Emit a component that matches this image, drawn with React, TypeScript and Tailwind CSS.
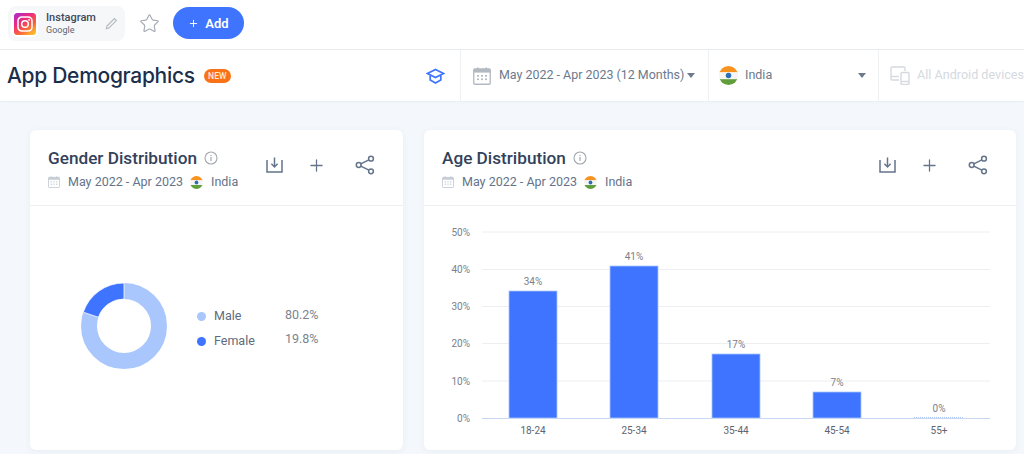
import type { ReactNode } from "react"
import { Plus, Star } from "lucide-react"

function Flag({ size }: { size: number }) {
  return (
    <svg width={size} height={size} viewBox="0 0 18 18" className="shrink-0">
      <defs>
        <clipPath id="flag-clip">
          <circle cx="9" cy="9" r="9" />
        </clipPath>
      </defs>
      <g clipPath="url(#flag-clip)">
        <rect width="18" height="6" fill="#f7931e" />
        <rect y="6" width="18" height="6.5" fill="#f5f5f5" />
        <rect y="12.5" width="18" height="5.5" fill="#5f9e3a" />
      </g>
      <circle cx="9" cy="9" r="2.6" fill="#2f6db5" />
    </svg>
  )
}

function CalendarIcon({ className }: { className: string }) {
  return (
    <svg viewBox="0 0 18 18" className={className} fill="none">
      <rect x="0.75" y="2" width="16.5" height="15.25" rx="1" fill="#fff" stroke="currentColor" strokeWidth="1.3" />
      <rect x="0.75" y="2" width="16.5" height="3.6" fill="currentColor" />
      <rect x="4" y="0.5" width="1.6" height="3" fill="currentColor" />
      <rect x="12.4" y="0.5" width="1.6" height="3" fill="currentColor" />
      <g fill="currentColor">
        <rect x="4" y="8" width="2" height="1.6" />
        <rect x="8" y="8" width="2" height="1.6" />
        <rect x="12" y="8" width="2" height="1.6" />
        <rect x="4" y="11.5" width="2" height="1.6" />
        <rect x="8" y="11.5" width="2" height="1.6" />
        <rect x="12" y="11.5" width="2" height="1.6" />
      </g>
    </svg>
  )
}

function InstagramLogo() {
  return (
    <svg width="22" height="22" viewBox="0 0 22 22">
      <defs>
        <linearGradient id="ig-grad" x1="0" y1="0" x2="0.7" y2="1">
          <stop offset="0" stopColor="#a22bd8" />
          <stop offset="0.4" stopColor="#ee2a7b" />
          <stop offset="0.75" stopColor="#f9663a" />
          <stop offset="1" stopColor="#fdb32b" />
        </linearGradient>
      </defs>
      <rect width="22" height="22" rx="3.5" fill="url(#ig-grad)" />
      <rect x="4" y="4" width="14" height="14" rx="3.8" fill="none" stroke="#fff" strokeWidth="1.5" />
      <circle cx="11" cy="11" r="3.3" fill="none" stroke="#fff" strokeWidth="1.5" />
      <circle cx="15.1" cy="6.9" r="0.9" fill="#fff" />
    </svg>
  )
}

function InfoIcon() {
  return (
    <svg width="14" height="14" viewBox="0 0 14 14" fill="none" className="shrink-0">
      <circle cx="7" cy="7" r="6" stroke="#a3a9b0" strokeWidth="1.1" />
      <rect x="6.4" y="6" width="1.2" height="4" fill="#a3a9b0" />
      <rect x="6.4" y="3.9" width="1.2" height="1.2" fill="#a3a9b0" />
    </svg>
  )
}

function CardActions() {
  return (
    <div className="flex h-fit items-center pt-[25px] pr-[28px] text-[#64748b]">
      <svg width="17" height="16" viewBox="0 0 17 16" fill="none" stroke="currentColor" strokeWidth="1.5">
        <path d="M1 3v12h15V3" />
        <path d="M8.5 0.5v9" />
        <path d="M5.4 6.8 8.5 10l3.1-3.2" />
      </svg>
      <Plus size={19} strokeWidth={1.6} className="ml-[24px]" />
      <svg width="20" height="20" viewBox="0 0 20 20" fill="none" stroke="currentColor" strokeWidth="1.5" className="ml-[29px]">
        <circle cx="16" cy="3.7" r="2.4" />
        <circle cx="3.7" cy="10" r="2.4" />
        <circle cx="16" cy="16.3" r="2.4" />
        <path d="M5.8 8.9 13.9 4.8M5.8 11.1l8.1 4.1" />
      </svg>
    </div>
  )
}

function CardHeader({ title, actions }: { title: string; actions: ReactNode }) {
  return (
    <div className="flex h-[76px] justify-between border-b border-[#edf0f3] pl-[18px]">
      <div className="pt-[17px]">
        <div className="flex items-center gap-[7px]">
          <span className="text-[17.2px] leading-[22px] font-medium text-[#33425b]">{title}</span>
          <InfoIcon />
        </div>
        <div className="mt-[4px] flex items-center text-[12.5px] leading-[18px] text-[#64748b]">
          <CalendarIcon className="h-[12px] w-[12px] text-[#c5ccd5]" />
          <span className="ml-[8px]">May 2022 - Apr 2023</span>
          <span className="ml-[7px]"><Flag size={13} /></span>
          <span className="ml-[8px]">India</span>
        </div>
      </div>
      {actions}
    </div>
  )
}

const ticks = [
  { label: "50%", y: 232 },
  { label: "40%", y: 269.5 },
  { label: "30%", y: 306.5 },
  { label: "20%", y: 343.5 },
  { label: "10%", y: 381 },
]

const bars = [
  { label: "18-24", value: "34%", x: 509, top: 291 },
  { label: "25-34", value: "41%", x: 610, top: 266 },
  { label: "35-44", value: "17%", x: 712, top: 354 },
  { label: "45-54", value: "7%", x: 813, top: 392 },
]

function AgeChart() {
  return (
    <svg viewBox="424 206 592 244" className="h-[244px] w-[592px]" fontSize="10">
      {ticks.map((t) => (
        <g key={t.label}>
          <line x1="482" x2="990" y1={t.y} y2={t.y} stroke="#eceef0" />
          <text x="470" y={t.y + 3.5} textAnchor="end" fill="#7a818b">{t.label}</text>
        </g>
      ))}
      <text x="470" y="421.5" textAnchor="end" fill="#7a818b">0%</text>
      {bars.map((b) => (
        <g key={b.label}>
          <rect x={b.x} y={b.top} width="48" height={418 - b.top} fill="#3e74ff" stroke="#a9c5fc" strokeWidth="0.8" />
          <text x={b.x + 24} y={b.top - 6} textAnchor="middle" fill="#7a818b">{b.value}</text>
          <text x={b.x + 24} y="434" textAnchor="middle" fill="#5c6470">{b.label}</text>
        </g>
      ))}
      <line x1="914" x2="963" y1="417.5" y2="417.5" stroke="#a9c5fc" strokeDasharray="1 1" />
      <text x="939" y="412" textAnchor="middle" fill="#7a818b">0%</text>
      <text x="939" y="434" textAnchor="middle" fill="#5c6470">55+</text>
      <line x1="482" x2="990" y1="418.5" y2="418.5" stroke="#c9d8f2" />
    </svg>
  )
}

function Donut() {
  return (
    <svg width="86" height="86" viewBox="0 0 86 86" className="shrink-0">
      <circle cx="43" cy="43" r="35" fill="none" stroke="#a9c7fd" strokeWidth="16" />
      <path d="M43 0A43 43 0 0 0 2.3 29.2L17.4 34.3A27 27 0 0 1 43 16Z" fill="#3e74ff" stroke="#fff" strokeWidth="0.8" />
    </svg>
  )
}

export default function App() {
  return (
    <div className="flex h-[454px] w-[1024px] flex-col overflow-hidden bg-[#f4f8fc] font-['Roboto',sans-serif]">
      <div className="flex h-[50px] shrink-0 items-start border-b border-[#e9ecef] bg-white">
        <div className="mt-[6px] ml-[8px] flex h-[35px] w-[117px] items-center rounded-lg bg-[#f6f7f8] pl-[3px]">
          <div className="flex h-[27px] w-[27px] items-center justify-center rounded-md bg-white">
            <InstagramLogo />
          </div>
          <div className="ml-[8px] flex flex-col">
            <span className="text-[11px] leading-[13px] font-medium text-[#41495a]">Instagram</span>
            <span className="text-[9px] leading-[12px] text-[#5d6675]">Google</span>
          </div>
          <svg width="13" height="13" viewBox="0 0 13 13" className="ml-[9px] text-[#b4b9c0]" fill="currentColor">
            <path d="M9.4 0.8 12.2 3.6 4.2 11.6 0.6 12.4 1.4 8.8Z M9.4 2.4 2.4 9.4 2 11 3.6 10.6 10.6 3.6Z" fillRule="evenodd" />
          </svg>
        </div>
        <Star size={21} strokeWidth={1.3} className="mt-[13px] ml-[14px] text-[#a5abb3]" />
        <button className="mt-[7px] ml-[13px] flex h-[32px] w-[71px] items-center justify-center gap-[6px] rounded-full bg-[#3e74fe] pt-[1px] text-[13px] font-semibold text-white">
          <Plus size={11} strokeWidth={2} />
          Add
        </button>
      </div>

      <div className="flex h-[51px] shrink-0 items-stretch bg-white shadow-[0_1px_2px_rgba(30,60,110,0.06)]">
        <div className="flex w-[460px] shrink-0 items-center pt-[1px] pl-[7px]">
          <h1 className="font-['Inter',sans-serif] text-[21px] font-medium tracking-[-0.3px] text-[#1b2e4b]">App Demographics</h1>
          <span className="ml-[9px] flex h-[14px] w-[27px] items-center justify-center rounded-full bg-[#f97316] text-[8.5px] font-medium text-[#ffe9d6]">NEW</span>
          <svg width="19" height="17" viewBox="0 0 19 17" fill="none" stroke="#3e74fe" strokeWidth="1.7" className="mr-[15px] ml-auto">
            <path d="M9.5 1.5 17.5 5.5 9.5 9.5 1.5 5.5Z" />
            <path d="M4.2 7.5v4.6l5.3 3 5.3-3V7.5" />
          </svg>
        </div>
        <div className="flex w-[248px] shrink-0 items-center border-l border-[#eef0f2] pl-[12px] text-[12.45px] text-[#6b7a8d]">
          <CalendarIcon className="h-[18px] w-[18px] text-[#b3b9c1]" />
          <span className="ml-[8px]">May 2022 - Apr 2023 (12 Months)</span>
          <span className="ml-[3px] h-0 w-0 border-x-[4.5px] border-t-[5px] border-x-transparent border-t-[#6b7a8d]" />
        </div>
        <div className="flex w-[170px] shrink-0 items-center border-l border-[#eef0f2] pl-[10px] text-[12.5px] text-[#6b7a8d]">
          <Flag size={19} />
          <span className="ml-[7px]">India</span>
          <span className="mr-[12px] ml-auto h-0 w-0 border-x-[4.5px] border-t-[5px] border-x-transparent border-t-[#6b7a8d]" />
        </div>
        <div className="flex min-w-0 flex-1 items-center border-l border-[#eef0f2] pl-[11px] text-[12.6px] whitespace-nowrap text-[#d5dae0]">
          <svg width="20" height="19" viewBox="0 0 20 19" fill="none" stroke="currentColor" strokeWidth="1.4" className="shrink-0">
            <path d="M9 14H2a1 1 0 0 1-1-1V2a1 1 0 0 1 1-1h12a1 1 0 0 1 1 1v3" />
            <path d="M1 10.5h8" />
            <rect x="11" y="6.5" width="8" height="12" rx="1.3" />
            <path d="M11 15.5h8" />
          </svg>
          <span className="ml-[7px]">All Android devices</span>
        </div>
      </div>

      <div className="flex items-start gap-[21px] pt-[29px] pl-[30px]">
        <section className="h-[320px] w-[373px] shrink-0 rounded-md bg-white shadow-[0_1px_6px_rgba(30,60,110,0.06)]">
          <CardHeader title="Gender Distribution" actions={<CardActions />} />
          <div className="flex items-start pt-[77px] pl-[51px]">
            <Donut />
            <div className="mt-[24px] ml-[30px] grid grid-cols-[88px_auto] gap-y-[7px] text-[12.5px] leading-[18px]">
              <div className="flex items-center text-[#5f6b7b]">
                <span className="h-[9px] w-[9px] rounded-full bg-[#a9c7fd]" />
                <span className="ml-[8px]">Male</span>
              </div>
              <span className="-mt-[1px] text-[#7c838d]">80.2%</span>
              <div className="flex items-center text-[#5f6b7b]">
                <span className="h-[9px] w-[9px] rounded-full bg-[#3e74ff]" />
                <span className="ml-[8px]">Female</span>
              </div>
              <span className="-mt-[2px] text-[#7c838d]">19.8%</span>
            </div>
          </div>
        </section>

        <section className="h-[320px] w-[592px] shrink-0 rounded-md bg-white shadow-[0_1px_6px_rgba(30,60,110,0.06)]">
          <CardHeader title="Age Distribution" actions={<CardActions />} />
          <AgeChart />
        </section>
      </div>
    </div>
  )
}
